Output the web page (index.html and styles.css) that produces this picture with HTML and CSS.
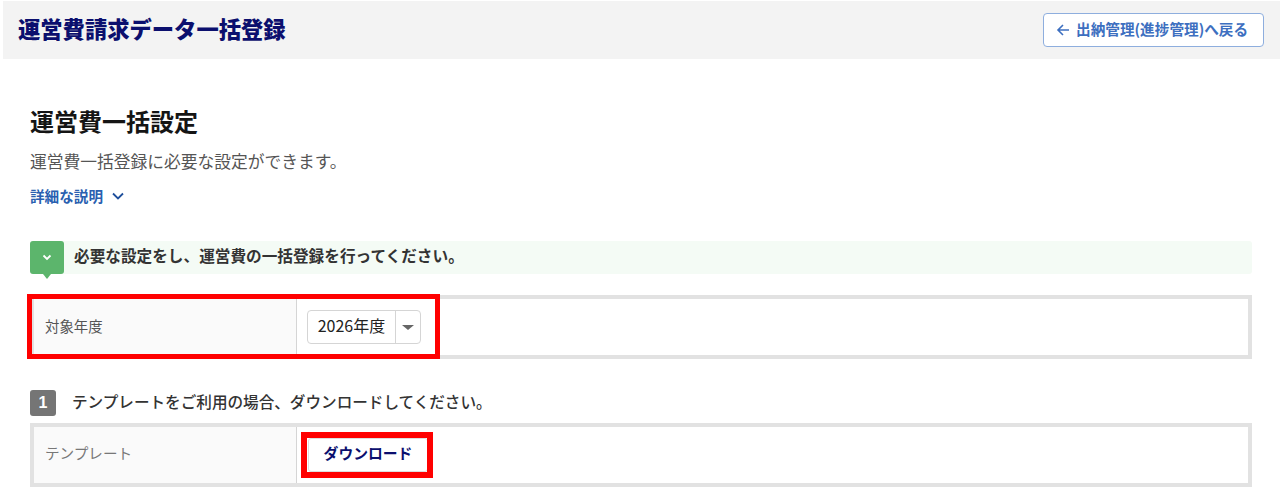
FILE: index.html
```html
<!DOCTYPE html>
<html lang="ja">
<head>
<meta charset="utf-8">
<title>運営費請求データ一括登録</title>
<link rel="stylesheet" href="styles.css">
</head>
<body>
<header class="top">
  <h1 class="top-title">運営費請求データ一括登録</h1>
  <a class="back"><svg class="back-icon" viewBox="0 0 14 14"><path d="M13 7H2M7 2 2 7l5 5"/></svg><span class="lift">出納管理(進捗管理)へ戻る</span></a>
</header>
<main class="main">
  <h2 class="title">運営費一括設定</h2>
  <p class="lead">運営費一括登録に必要な設定ができます。</p>
  <a class="more"><span class="lift-1">詳細な説明</span><svg class="more-icon" viewBox="0 0 12 8"><path d="M1 1.5 6 6.5l5-5"/></svg></a>
  <div class="notice">
    <span class="notice-tab"><svg class="notice-icon" viewBox="0 0 10 7"><path d="M1.5 1.5 5 5l3.5-3.5"/></svg></span>
    <span class="notice-text lift">必要な設定をし、運営費の一括登録を行ってください。</span>
  </div>
  <div class="panel panel-year">
    <div class="label"><span class="lift">対象年度</span></div>
    <div class="value">
      <div class="select"><span class="select-text"><span class="lift">2026年度</span></span><span class="select-arrow"></span></div>
    </div>
    <div class="mark mark-year"></div>
  </div>
  <div class="step">
    <span class="step-num">1</span>
    <span class="step-text lift">テンプレートをご利用の場合、ダウンロードしてください。</span>
  </div>
  <div class="panel">
    <div class="label label-muted"><span class="lift-more">テンプレート</span></div>
    <div class="value">
      <a class="download"><span class="lift-more">ダウンロード</span></a>
    </div>
    <div class="mark mark-download"></div>
  </div>
</main>
</body>
</html>
```
FILE: styles.css
```css
* { box-sizing: border-box; }
html, body { margin: 0; padding: 0; }
body {
  background: #fff;
  color: #333;
  font-family: "Noto Sans CJK JP", "Noto Sans", sans-serif;
  overflow: hidden;
  height: 494px;
}
.lift { padding-bottom: 4px; }
.lift-1 { padding-bottom: 2px; }
.lift-more { padding-bottom: 6px; }
.top {
  margin: 1px 0 0 3px;
  height: 58px;
  background: #f3f3f3;
  display: flex;
  align-items: center;
  justify-content: space-between;
  padding: 0 16px 0 15px;
}
.top-title {
  margin: 0;
  padding-bottom: 4px;
  font-size: 22.3px;
  font-weight: 900;
  color: #0b0f6e;
  line-height: 1;
}
.back {
  width: 221px;
  height: 34px;
  display: flex;
  align-items: center;
  padding-left: 12px;
  background: #fff;
  border: 1px solid #8eaede;
  border-radius: 4px;
  color: #3d6fc0;
  font-size: 14.65px;
  font-weight: 700;
  white-space: nowrap;
}
.back-icon {
  width: 14px;
  height: 14px;
  margin-right: 6px;
  fill: none;
  stroke: #3d6fc0;
  stroke-width: 1.6;
}
.main { padding: 45px 28px 0 30px; }
.title {
  margin: 0;
  font-size: 24px;
  font-weight: 700;
  line-height: 34px;
  color: #151515;
}
.lead {
  margin: 11px 0 0;
  font-size: 16.75px;
  line-height: 24px;
  color: #555;
}
.more {
  display: flex;
  align-items: center;
  margin-top: 13px;
  height: 20px;
  font-size: 14.6px;
  font-weight: 700;
  color: #2a5fb0;
}
.more-icon {
  width: 12px;
  height: 8px;
  margin-left: 9px;
  fill: none;
  stroke: #1f4f9c;
  stroke-width: 1.8;
}
.notice {
  margin-top: 35px;
  height: 33px;
  display: flex;
  align-items: center;
  background: #f4fbf5;
  border-radius: 3px;
}
.notice-tab {
  position: relative;
  width: 34px;
  height: 33px;
  display: flex;
  align-items: center;
  justify-content: center;
  background: #5cb56c;
  border-radius: 3px;
}
.notice-tab::after {
  content: "";
  position: absolute;
  left: 13px;
  bottom: -5px;
  border-style: solid;
  border-width: 5px 4px 0;
  border-color: #5cb56c transparent transparent;
}
.notice-icon {
  width: 10px;
  height: 7px;
  fill: none;
  stroke: #fff;
  stroke-width: 1.8;
}
.notice-text {
  margin-left: 10px;
  font-size: 15.65px;
  font-weight: 700;
  color: #333;
}
.panel {
  position: relative;
  display: flex;
  height: 64px;
  border: 4px solid #e2e2e2;
}
.panel-year { margin-top: 21px; }
.label {
  width: 263px;
  display: flex;
  align-items: center;
  padding-left: 11px;
  background: #fafafa;
  border-right: 1px solid #d5d5d5;
  font-size: 14.4px;
  color: #555;
}
.label-muted { color: #777; font-size: 14.6px; }
.value {
  flex: 1;
  display: flex;
  align-items: center;
  padding-left: 10px;
}
.select {
  width: 114px;
  height: 34px;
  display: flex;
  align-items: center;
  border: 1px solid #d5d5d5;
  border-radius: 4px;
  background: #fff;
}
.select-text {
  width: 88px;
  height: 100%;
  display: flex;
  align-items: center;
  justify-content: center;
  border-right: 1px solid #d5d5d5;
  font-size: 16px;
  color: #222;
}
.select-arrow {
  margin-left: 6px;
  border-style: solid;
  border-width: 5px 6px 0;
  border-color: #666 transparent transparent;
}
.step {
  margin-top: 31px;
  display: flex;
  align-items: center;
  height: 26px;
  margin-bottom: 7px;
}
.step-num {
  width: 26px;
  height: 26px;
  display: flex;
  align-items: center;
  justify-content: center;
  background: #757575;
  border-radius: 3px;
  color: #fff;
  font-family: "Liberation Sans", sans-serif;
  font-size: 16px;
  font-weight: 700;
}
.step-text {
  margin-left: 16px;
  font-size: 15.6px;
  font-weight: 500;
  color: #333;
}
.download {
  width: 120px;
  height: 34px;
  margin-left: 1px;
  display: flex;
  align-items: center;
  justify-content: center;
  background: #fff;
  border: 1px solid #ddd;
  border-radius: 3px;
  color: #0b0f6e;
  font-size: 14.8px;
  font-weight: 700;
  white-space: nowrap;
}
.mark {
  position: absolute;
  border: 5px solid #f00;
  pointer-events: none;
}
.mark-year {
  left: -7px;
  top: -5px;
  width: 413px;
  height: 65px;
}
.mark-download {
  border-width: 6px;
  left: 267px;
  top: 5px;
  width: 132px;
  height: 46px;
}
```
